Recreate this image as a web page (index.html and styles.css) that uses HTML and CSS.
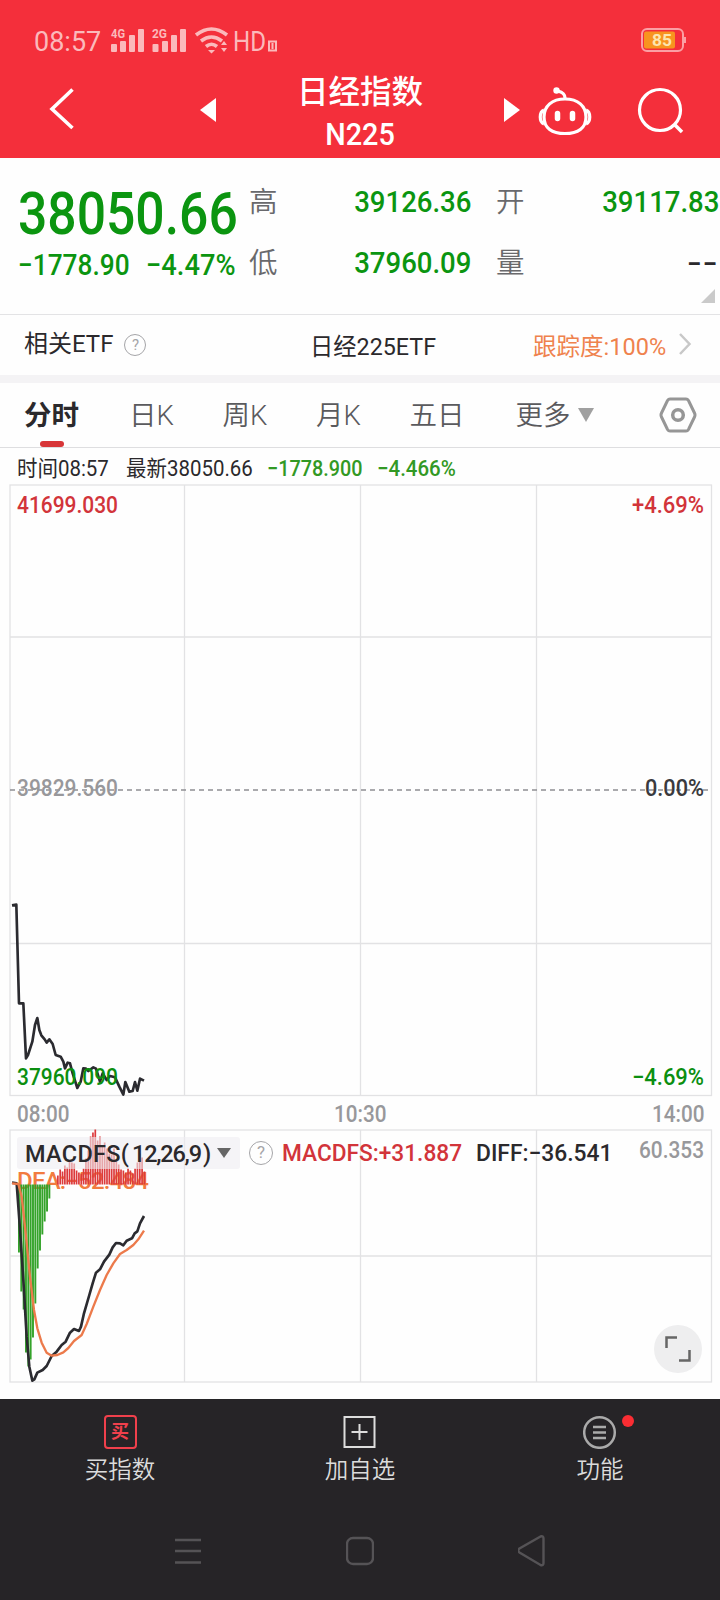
FILE: index.html
```html
<!DOCTYPE html>
<html lang="zh-CN">
<head>
    <title>日经指数 N225</title>
    <meta charset="utf-8"/>
    <link rel="stylesheet" href="styles.css">
</head>
<body>
    <div class="header">
        <div class="status-bar">
            <span class="clock">08:57</span>
            <svg class="status-icons" width="180" height="40" viewBox="0 0 180 40" fill="#fbb9bb">
                <text x="1" y="15" class="net" textLength="14" lengthAdjust="spacingAndGlyphs">4G</text>
                <rect x="1" y="21" width="6" height="8" rx="1"/>
                <rect x="10" y="18" width="6" height="11" rx="1"/>
                <rect x="19" y="12" width="6" height="17" rx="1"/>
                <rect x="28" y="6" width="6" height="23" rx="1"/>
                <text x="42" y="15" class="net" textLength="15" lengthAdjust="spacingAndGlyphs">2G</text>
                <rect x="42.500" y="21" width="6" height="8" rx="1"/>
                <rect x="52" y="18" width="6" height="11" rx="1"/>
                <rect x="61" y="12" width="6" height="17" rx="1"/>
                <rect x="70" y="6" width="6" height="23" rx="1"/>
                <path d="M86 12q15.500-12 31 0M91 18q10.500-8 21 0M96 23.500q5.500-4.500 11 0" fill="none" stroke="#fbb9bb" stroke-width="3.600"/>
                <path d="M98 27h7l-3.500 3.500zM111 22l3-4 3 4zM111 25h6l-3 4z"/>
                <text x="123" y="28" class="hd" textLength="33" lengthAdjust="spacingAndGlyphs">HD</text>
                <path d="M159 18.500h7v9h-7zM162.500 20v6" fill="none" stroke="#fbb9bb" stroke-width="2"/>
            </svg>
            <svg class="battery" width="46" height="26" viewBox="0 0 46 26">
                <rect x="2" y="2" width="41" height="22" rx="5" fill="none" stroke="#fb9fa4" stroke-width="2"/>
                <rect x="44" y="10" width="2" height="6" fill="#fb9fa4"/>
                <rect x="4" y="4.500" width="31" height="17" rx="2" fill="#f8941f"/>
                <text x="12" y="18.500" textLength="20" lengthAdjust="spacingAndGlyphs">85</text>
            </svg>
        </div>
        <div class="title-bar">
            <svg class="back" width="26" height="42" viewBox="0 0 26 42"><path d="M23.500 1.500L3 21l20.500 19" fill="none" stroke="#fff" stroke-width="3.600"/></svg>
            <svg class="prev" width="16" height="24" viewBox="0 0 16 24"><path d="M16 0v24L0 12z" fill="#fff"/></svg>
            <div class="title">
                <div class="name">日经指数</div>
                <div class="code">N225</div>
            </div>
            <svg class="next" width="16" height="24" viewBox="0 0 16 24"><path d="M0 0v24l16-12z" fill="#fff"/></svg>
            <svg class="robot" width="54" height="50" viewBox="0 0 54 50" fill="none" stroke="#fff" stroke-width="3.200">
                <path d="M27 13C14 13 6 20 6 31s8 16.500 21 16.500S48 42 48 31s-8-18-21-18z"/>
                <path d="M6 24c-5 2-5 12 0 14M48 24c5 2 5 12 0 14M27 12c0-4-3-6-7-7"/>
                <circle cx="18.500" cy="4.500" r="3.200" fill="#fff" stroke="none"/>
                <path d="M19.500 27.500v5M34.500 27.500v5" stroke-width="5.500" stroke-linecap="round"/>
            </svg>
            <svg class="search" width="48" height="48" viewBox="0 0 48 48" fill="none" stroke="#fff" stroke-width="3.200">
                <circle cx="23" cy="23" r="20.500"/>
                <path d="M37 37l8 8" stroke-width="3.500"/>
            </svg>
        </div>
    </div>

    <div class="quote">
        <div class="quote-main">
            <div class="price"><span class="num">38050.66</span></div>
            <div class="change"><span class="num">−1778.90</span><span class="num percent">−4.47%</span></div>
        </div>
        <div class="quote-cell">
            <div class="row"><span>高</span><b class="num">39126.36</b></div>
            <div class="row"><span>低</span><b class="num">37960.09</b></div>
        </div>
        <div class="quote-cell">
            <div class="row"><span>开</span><b class="num">39117.83</b></div>
            <div class="row"><span>量</span><b class="dash">--</b></div>
        </div>
        <i class="corner"></i>
    </div>

    <div class="etf">
        <div class="etf-label">相关ETF <span class="help">?</span></div>
        <div class="etf-name">日经225ETF</div>
        <div class="etf-track"><span>跟踪度:100%</span>
            <svg width="14" height="24" viewBox="0 0 14 24"><path d="M2 2l9.500 10L2 22" fill="none" stroke="#c8c8c8" stroke-width="2.500"/></svg>
        </div>
    </div>

    <div class="tabs">
        <div class="tab active">分时</div>
        <div class="tab">日K</div>
        <div class="tab">周K</div>
        <div class="tab">月K</div>
        <div class="tab">五日</div>
        <div class="tab">更多<i class="down"></i></div>
        <svg class="setting" width="38" height="36" viewBox="0 0 38 36" fill="none" stroke="#969696" stroke-width="3">
            <path d="M11 2h16q1.500 0 2.500 1.500l6 12.500q1 2 0 4l-6 12.500Q28.500 34 27 34H11q-1.500 0-2.500-1.500L2.500 20q-1-2 0-4l6-12.500Q9.500 2 11 2z"/>
            <circle cx="19" cy="18" r="5.300" stroke-width="3.500"/>
        </svg>
    </div>

    <div class="ticker">
        <span class="t1">时间08:57</span>
        <span class="t2">最新38050.66</span>
        <span class="t3 down-color">−1778.900</span>
        <span class="t4 down-color">−4.466%</span>
    </div>

    <svg class="chart" width="720" height="613" viewBox="0 484 720 613">
        <g class="grid">
            <rect x="10" y="485" width="701.500" height="610.500"/>
            <path d="M184.500 485v610M360.500 485v610M536.500 485v610M10 637h701M10 943.500h701"/>
        </g>
        <path class="middle" d="M10 790h701"/>
        <!-- price line, drawn on a grid three times finer than the screen -->
        <g transform="translate(0 880) scale(.33333)">
            <polyline class="line" points="36,76 49,74 57,370 70,370 78,535 84,525 97,485 105,435 112,414 118,450 124,466 134,478 140,488 148,478 158,492 167,525 182,530 190,545 195,565 203,548 210,550 218,580 232,624 242,605 250,565 258,566 265,573 280,562 288,566 300,605 308,580 320,600 330,588 345,592 358,620 370,644 376,606 388,635 398,633 405,606 412,632 420,596 432,602"/>
        </g>
        <text x="17" y="512.500" class="red" textLength="101" lengthAdjust="spacingAndGlyphs">41699.030</text>
        <text x="632" y="512.500" class="red" textLength="72" lengthAdjust="spacingAndGlyphs">+4.69%</text>
        <text x="17" y="796" class="gray" textLength="101" lengthAdjust="spacingAndGlyphs">39829.560</text>
        <text x="645" y="796" class="black" textLength="59" lengthAdjust="spacingAndGlyphs">0.00%</text>
        <text x="17" y="1084.500" class="green" textLength="101" lengthAdjust="spacingAndGlyphs">37960.090</text>
        <text x="632" y="1084.500" class="green" textLength="72" lengthAdjust="spacingAndGlyphs">−4.69%</text>
    </svg>

    <div class="times">
        <span class="num">08:00</span>
        <span class="num">10:30</span>
        <span class="num">14:00</span>
    </div>

    <div class="macd">
        <svg class="chart" width="720" height="270" viewBox="0 1129 720 270">
            <g class="grid">
                <rect x="10" y="1130" width="701.500" height="252"/>
                <path d="M184.500 1130v252M360.500 1130v252M536.500 1130v252M10 1256h701"/>
            </g>
            <text x="17" y="1188.500" class="orange" textLength="132" lengthAdjust="spacing">DEA:−52.484</text>
            <g id="bars"></g>
            <g transform="translate(0 1120) scale(.33333)">
                <polyline class="line" points="36,188 50,190 58,300 70,480 80,650 88,740 97,782 103,778 112,758 128,750 140,738 155,708 170,695 185,675 197,665 210,638 222,627 237,633 243,620 252,580 268,525 278,490 288,458 300,448 312,425 328,404 338,382 348,369 360,370 370,376 380,362 396,355 404,340 412,334 420,310 432,288"/>
                <polyline class="line dea" points="36,190 55,192 65,230 75,320 90,470 102,570 112,625 125,668 140,698 155,707 172,705 190,697 205,684 222,663 245,645 260,612 280,560 300,510 320,465 340,430 360,402 380,390 400,375 415,358 432,332"/>
            </g>
            <text x="639" y="1158" class="gray" textLength="65" lengthAdjust="spacingAndGlyphs">60.353</text>
        </svg>
        <div class="macd-head">
            <div class="select">
                <svg width="223" height="32" viewBox="0 0 223 32">
                    <text x="8" y="24.500" textLength="104" lengthAdjust="spacing">MACDFS(</text>
                    <text x="115" y="24.500" textLength="70" lengthAdjust="spacing">12,26,9</text>
                    <text x="186" y="24.500">)</text>
                    <path d="M200 11h14l-7 10z" fill="#666"/>
                </svg>
            </div>
            <span class="help">?</span>
            <span class="m1">MACDFS:+31.887</span>
            <span class="m2">DIFF:−36.541</span>
        </div>
        <div class="expand">
            <svg width="26" height="26" viewBox="0 0 26 26" fill="none" stroke="#666" stroke-width="2.500"><path d="M1.500 12V1.500H12M14 24.500h10.500V14"/></svg>
        </div>
    </div>

    <div class="bottom">
        <div class="actions">
            <div class="action">
                <span class="buy-icon">买</span>
                <p>买指数</p>
            </div>
            <div class="action">
                <svg width="34" height="34" viewBox="0 0 34 34" fill="none" stroke="#ddd" stroke-width="2"><rect x="1.500" y="2" width="30" height="30"/><path d="M8.500 17h16M16.500 9v16"/></svg>
                <p>加自选</p>
            </div>
            <div class="action">
                <svg width="34" height="34" viewBox="0 0 34 34" fill="none" stroke="#aaa" stroke-width="2.500"><circle cx="16.500" cy="17.500" r="15.300"/><path d="M10 12h13M10 17.500h13M10 23h13"/></svg>
                <i class="badge"></i>
                <p>功能</p>
            </div>
        </div>
        <div class="system">
            <svg width="28" height="32" viewBox="0 0 28 32"><path d="M1 5h26M1 16h26M1 27.500h26"/></svg>
            <svg width="28" height="32" viewBox="0 0 28 32"><rect x="1" y="3" width="26" height="26" rx="6"/></svg>
            <svg width="28" height="32" viewBox="0 0 28 32"><path d="M22.500 1.500L1.500 13.500q-2.500 2 0 4L22.500 30q3 1 3-2V3.500q0-3-3-2z"/></svg>
        </div>
    </div>

    <script>
        const zero = 1184.5;
        const step = 2.34;
        // bar heights in px, one per minute
        const down = [68, 107, 125, 168, 182, 175, 153, 119, 84, 66, 50, 37, 27, 14];
        const up = [9, 15, 13, 19, 17, 23, 22, 21, 14, 12, 11, 16, 26, 34, 48, 52, 55, 44, 48, 38, 42, 36, 31, 30, 36, 24, 20, 15, 14, 12, 16, 14, 11, 16, 22, 31, 27, 13];
        let html = '';
        down.forEach((h, i) => {
            html += `<rect class="bar-down" x="${(18 + i * step).toFixed(2)}" y="${zero}" width="1.9" height="${h}"/>`;
        });
        up.forEach((h, i) => {
            html += `<rect class="bar-up" x="${(57 + i * step).toFixed(2)}" y="${zero - h}" width="1.7" height="${h}"/>`;
        });
        document.getElementById('bars').innerHTML = html;
    </script>
</body>
</html>
```
FILE: styles.css
```css
body {
    font-family: Roboto, "Noto Sans CJK SC", sans-serif;
    margin: 0;
    width: 720px;
    height: 1600px;
    overflow: hidden;
    background-color: #fefefe;
    color: #2b292c;
}
svg {
    display: block;
    flex: none;
}
p {
    margin: 0;
}
.num {
    display: inline-block;
    white-space: nowrap;
}
.header {
    height: 158px;
    background-color: #f42f3b;
    color: #fff;
}
.status-bar {
    height: 64px;
    display: flex;
    align-items: flex-start;
    box-sizing: border-box;
    padding: 23px 34px 0 34px;
}
.clock {
    width: 76px;
    font-size: 27px;
    line-height: 38px;
    color: #fbb9bb;
}
.status-icons {
    font-weight: bold;
}
.net {
    font-size: 12px;
}
.hd {
    font-size: 27px;
    font-weight: 400;
}
.battery {
    margin: 4px 0 0 auto;
    font-size: 16px;
    font-weight: bold;
    fill: #fde6b0;
}
.title-bar {
    height: 94px;
    display: flex;
    align-items: flex-start;
}
.back {
    margin: 24px 0 0 49px;
}
.prev {
    margin: 34px 0 0 125px;
}
.title {
    width: 288px;
    text-align: center;
    font-weight: 500;
}
.name {
    font-size: 31.5px;
    line-height: 42px;
    margin-top: 8px;
}
.code {
    font-size: 31px;
    line-height: 42px;
    transform: scaleX(.93);
}
.next {
    margin: 34px 0 0 0;
}
.robot {
    margin: 22px 0 0 18px;
}
.search {
    margin: 23px 0 0 45px;
}
.quote {
    height: 157px;
    box-sizing: border-box;
    border-bottom: 1px solid #e3e3e5;
    display: flex;
    position: relative;
    color: #0b9510;
}
.quote-main {
    width: 231px;
    padding: 25px 0 0 18px;
}
.price {
    height: 61px;
    line-height: 62px;
    font-size: 59px;
    font-weight: 500;
}
.price .num {
    transform: scaleX(.875);
    transform-origin: left;
}
.change {
    height: 42px;
    line-height: 42px;
    font-size: 29px;
    font-weight: 500;
    display: flex;
}
.change .num {
    width: 128px;
    transform: scaleX(.905);
    transform-origin: left;
}
.change .percent {
    width: 90px;
    transform: scaleX(.94);
}
.quote-cell {
    width: 222px;
    padding-top: 14px;
}
.quote-cell + .quote-cell {
    width: 223px;
    padding-left: 25px;
}
.row {
    display: flex;
    justify-content: space-between;
    height: 61px;
    line-height: 61px;
}
.row span {
    font-size: 28.5px;
    color: #69696c;
    font-weight: 350;
}
.row b {
    font-size: 29px;
    font-weight: 500;
    transform: scaleX(.95);
    transform-origin: right;
}
.row .dash {
    color: #2b292c;
    letter-spacing: 1px;
    transform: scaleX(1.45);
}
.corner {
    position: absolute;
    right: 5px;
    bottom: 11px;
    border-left: 14px solid transparent;
    border-bottom: 14px solid #cacaca;
}
.etf {
    height: 60px;
    display: flex;
    align-items: center;
    font-size: 24px;
    border-bottom: 8px solid #f4f3f5;
}
.etf-label {
    width: 286px;
    padding-left: 24px;
    display: flex;
    align-items: center;
    gap: 11px;
    line-height: 34px;
    margin-top: -2px;
}
.help {
    display: block;
    box-sizing: border-box;
    width: 22px;
    height: 22px;
    border: 1.5px solid #a5a5a8;
    border-radius: 50%;
    color: #a5a5a8;
    font-size: 15px;
    line-height: 20px;
    text-align: center;
    flex: none;
}
.etf-label .help {
    margin-top: 2px;
}
.etf-name {
    width: 223px;
    margin-top: -2px;
    transform: scaleX(.97);
    transform-origin: left;
}
.etf-track {
    color: #ef824d;
    display: flex;
    align-items: center;
    gap: 9px;
    margin-top: -2px;
}
.etf-track span {
    transform: scaleX(.98);
    transform-origin: left;
}
.tabs {
    height: 65px;
    box-sizing: border-box;
    border-bottom: 1px solid #dedee0;
    display: flex;
    align-items: center;
    font-size: 27.5px;
    font-weight: 350;
    color: #5a5a5d;
    padding-left: 24px;
}
.tab {
    width: 93.5px;
    line-height: 66px;
    height: 64px;
    position: relative;
    white-space: nowrap;
}
.tab.active {
    width: 105px;
    color: #2b292c;
    font-weight: bold;
}
.tab.active::after {
    content: "";
    position: absolute;
    left: 16px;
    bottom: 0;
    width: 24px;
    height: 6px;
    border-radius: 3px;
    background-color: #d83638;
}
.tab:nth-child(5) {
    width: 106px;
}
.tab:nth-child(6) {
    width: 143px;
}
.down {
    display: inline-block;
    border: 8.500px solid transparent;
    border-top: 14px solid #a0a0a0;
    border-bottom: 0;
    margin-left: 7px;
    vertical-align: 3px;
}
.ticker {
    height: 36px;
    line-height: 41px;
    display: flex;
    font-size: 22px;
    padding-left: 17px;
    white-space: nowrap;
}
.ticker span {
    transform: scaleX(.93);
    transform-origin: left;
}
.t1 {
    width: 109px;
}
.t2 {
    width: 141px;
}
.t3 {
    width: 110px;
}
.ticker .t3 {
    transform: scaleX(.9);
}
.down-color {
    color: #329924;
    font-weight: 500;
}
.grid {
    fill: none;
    stroke: #e2e2e4;
    stroke-width: 1.3;
}
.middle {
    stroke: #8e8e92;
    stroke-width: 1.5;
    stroke-dasharray: 5 4;
}
.line {
    fill: none;
    stroke: #2b2b30;
    stroke-width: 8;
    stroke-linejoin: round;
}
.dea {
    stroke: #ec7a4b;
    stroke-width: 7;
}
.chart text {
    font-size: 23px;
    font-weight: 500;
}
.red {
    fill: #d2343a;
}
.gray {
    fill: #98989b;
}
.black {
    fill: #3a3a3d;
}
.green {
    fill: #0b8f10;
}
.orange {
    fill: #f27b40;
}
.chart .orange {
    font-size: 24px;
}
.bar-down {
    fill: #34a32a;
}
.bar-up {
    fill: #dc3a3c;
}
.times {
    height: 32px;
    line-height: 35px;
    display: flex;
    justify-content: space-between;
    padding: 0 13px 0 14px;
    font-size: 23px;
    font-weight: 500;
    color: #98989b;
}
.times .num {
    transform: scaleX(.9);
}
.macd {
    height: 270px;
    position: relative;
}
/* indicator name and values lie over the plot */
.macd-head {
    position: absolute;
    left: 17px;
    top: 8px;
    height: 32px;
    display: flex;
    align-items: center;
    font-size: 24px;
    font-weight: 500;
    white-space: nowrap;
}
.select {
    width: 223px;
    background-color: rgba(238, 237, 241, .6);
    border-radius: 3px;
    margin-right: 9px;
}
.select text {
    font-size: 23.5px;
    font-weight: 500;
    fill: #2b292c;
}
.macd-head .help {
    width: 24px;
    height: 24px;
    font-size: 17px;
    font-weight: 400;
    line-height: 21px;
}
.m1 {
    color: #d2343a;
    margin-left: 9px;
    width: 194px;
    transform: scaleX(.945);
    transform-origin: left;
}
.m2 {
    transform: scaleX(.95);
    transform-origin: left;
}
.expand {
    position: absolute;
    right: 18px;
    top: 196px;
    width: 48px;
    height: 48px;
    border-radius: 50%;
    background-color: #eeeeef;
    display: flex;
    align-items: center;
    justify-content: center;
}
.bottom {
    height: 201px;
    background-color: #262427;
    color: #dcdcdc;
}
.actions {
    height: 103px;
    display: flex;
}
.action {
    width: 240px;
    padding-top: 16px;
    display: flex;
    flex-direction: column;
    align-items: center;
    position: relative;
    font-size: 23.5px;
    font-weight: 350;
}
.action p {
    line-height: 36px;
    margin-top: 3px;
}
.buy-icon {
    box-sizing: border-box;
    width: 33px;
    height: 34px;
    border: 2px solid #f0404c;
    border-radius: 4px;
    color: #f0404c;
    font-size: 18px;
    font-weight: bold;
    line-height: 30px;
    text-align: center;
}
.badge {
    position: absolute;
    left: 142px;
    top: 16px;
    width: 12px;
    height: 12px;
    border-radius: 50%;
    background-color: #fa2d33;
}
.system {
    display: flex;
    justify-content: space-between;
    padding: 33px 174px 0 174px;
    fill: none;
    stroke: #555356;
    stroke-width: 2.4;
}
```
